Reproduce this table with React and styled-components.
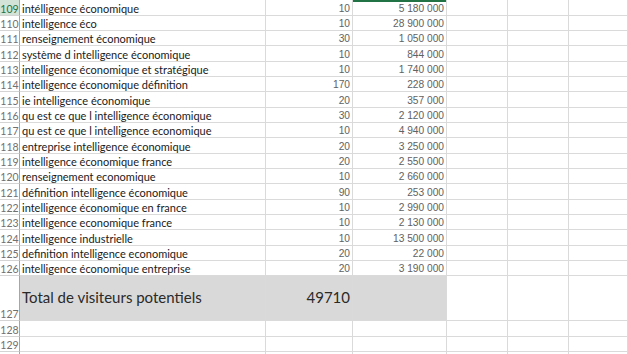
import React from 'react';
import styled, { createGlobalStyle } from 'styled-components';

const GlobalStyle = createGlobalStyle`
  html, body {
    margin: 0;
    padding: 0;
    background: #ffffff;
    overflow: hidden;
  }
`;

const Sheet = styled.div`
  width: 628px;
  height: 354px;
  overflow: hidden;
  background: #ffffff;
`;

const Row = styled.div`
  display: grid;
  grid-template-columns: 20px 246px 87px 94px 61px 61px 1fr;
  height: ${(p) => p.$h}px;
`;

const Header = styled.div`
  box-sizing: border-box;
  border-right: 1px solid #a6a6a6;
  border-bottom: 1px solid #d4d4d4;
  background: ${(p) => (p.$active ? '#d3e3d7' : '#ffffff')};
  color: ${(p) => (p.$active ? '#217346' : '#707070')};
  font-family: Lato, 'Noto Sans', sans-serif;
  font-size: 10.5px;
  display: flex;
  align-items: flex-end;
  justify-content: center;
  padding-bottom: 1px;
  line-height: 1;
`;

const Cell = styled.div`
  box-sizing: border-box;
  border-right: 1px solid #dadada;
  border-bottom: 1px solid #dadada;
  background: ${(p) => (p.$fill ? '#d9d9d9' : '#ffffff')};
  box-shadow: ${(p) => (p.$marked ? 'inset 0 2px 0 #217346' : 'none')};
  display: flex;
  align-items: flex-end;
  overflow: hidden;
  white-space: nowrap;
`;

const Label = styled(Cell)`
  padding: 0 0 1px 2px;
  font-family: Lato, 'Noto Sans', sans-serif;
  font-size: 11px;
  color: #1a1a1a;
  line-height: 1;
`;

const Num = styled(Cell)`
  justify-content: flex-end;
  padding: 0 2px 1px 0;
  font-family: 'Liberation Sans', Arial, sans-serif;
  font-size: 10.2px;
  color: #616161;
  line-height: 1;
`;

const TotalLabel = styled(Cell)`
  align-items: center;
  padding: 0 0 2px 2px;
  font-family: Lato, 'Noto Sans', sans-serif;
  font-size: 15px;
  color: #2a2a2a;
`;

const TotalNum = styled(Cell)`
  align-items: center;
  justify-content: flex-end;
  padding: 0 2px 2px 0;
  font-family: Lato, 'Noto Sans', sans-serif;
  font-size: 15px;
  color: #2a2a2a;
`;

const rows = [
  ['intélligence économique', '10', '5 180 000'],
  ['intelligence éco', '10', '28 900 000'],
  ['renseignement économique', '30', '1 050 000'],
  ['système d intelligence économique', '10', '844 000'],
  ['intelligence économique et stratégique', '10', '1 740 000'],
  ['intelligence économique définition', '170', '228 000'],
  ['ie intelligence économique', '20', '357 000'],
  ['qu est ce que l intelligence économique', '30', '2 120 000'],
  ['qu est ce que l intelligence economique', '10', '4 940 000'],
  ['entreprise intelligence économique', '20', '3 250 000'],
  ['intelligence économique france', '20', '2 550 000'],
  ['renseignement economique', '10', '2 660 000'],
  ['définition intelligence économique', '90', '253 000'],
  ['intelligence économique en france', '10', '2 990 000'],
  ['intelligence economique france', '10', '2 130 000'],
  ['intelligence industrielle', '10', '13 500 000'],
  ['definition intelligence economique', '20', '22 000'],
  ['intelligence économique entreprise', '20', '3 190 000'],
];

const EmptyCells = () => (
  <>
    <Cell />
    <Cell />
    <Cell />
  </>
);

export default function App() {
  return (
    <Sheet>
      <GlobalStyle />
      {rows.map(([label, vol, results], i) => (
        <Row key={label + i} $h={i % 3 === 0 ? 16 : 15}>
          <Header $active={i === 0}>{109 + i}</Header>
          <Label>{label}</Label>
          <Num>{vol}</Num>
          <Num $marked={i === 0}>{results}</Num>
          <EmptyCells />
        </Row>
      ))}
      <Row $h={45}>
        <Header>127</Header>
        <TotalLabel $fill>Total de visiteurs potentiels</TotalLabel>
        <TotalNum $fill>49710</TotalNum>
        <Cell $fill />
        <EmptyCells />
      </Row>
      {[128, 129].map((n) => (
        <Row key={n} $h={n === 128 ? 16 : 15}>
          <Header>{n}</Header>
          <Cell />
          <Cell />
          <Cell />
          <EmptyCells />
        </Row>
      ))}
      <Row $h={15}>
        <Header />
        <Cell />
        <Cell />
        <Cell />
        <EmptyCells />
      </Row>
    </Sheet>
  );
}
